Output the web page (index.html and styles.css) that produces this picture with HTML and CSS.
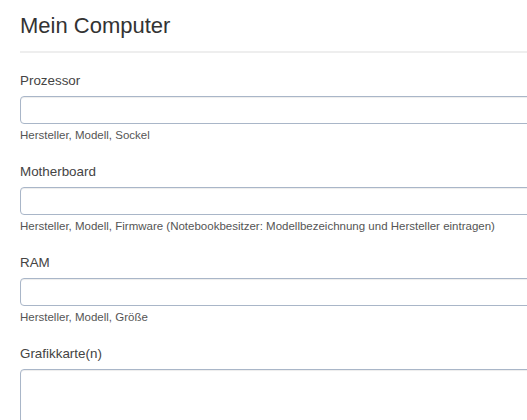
FILE: index.html
```html
<html>
<head>
<title>Mein Computer</title>
<link rel="stylesheet" href="styles.css">
</head>
<body>
<div class="page">
    <h1 class="title">Mein Computer</h1>
    <hr class="rule">
    <form class="sysform">
        <div class="group">
            <label class="lbl" for="cpu">Prozessor</label>
            <input class="field" id="cpu" type="text">
            <span class="help">Hersteller, Modell, Sockel</span>
        </div>
        <div class="group">
            <label class="lbl" for="board">Motherboard</label>
            <input class="field" id="board" type="text">
            <span class="help">Hersteller, Modell, Firmware (Notebookbesitzer: Modellbezeichnung und Hersteller eintragen)</span>
        </div>
        <div class="group">
            <label class="lbl" for="ram">RAM</label>
            <input class="field" id="ram" type="text">
            <span class="help">Hersteller, Modell, Größe</span>
        </div>
        <div class="group">
            <label class="lbl" for="gpu">Grafikkarte(n)</label>
            <textarea class="field area" id="gpu"></textarea>
        </div>
    </form>
</div>
</body>
</html>
```
FILE: styles.css
```css
html, body
{
    margin: 0;
    overflow: hidden;
    background-color: #fff;
}
.page
{
    width: 560px;
    padding: 13px 0 0 20px;
    font-family: "Liberation Sans", Arial, sans-serif;
}
.title
{
    margin: 0;
    font-size: 22px;
    line-height: 26px;
    font-weight: normal;
    color: #333;
}
.rule
{
    margin: 12px 0 18px 0;
    border: 0;
    border-top: 2px solid #eee;
}
.group
{
    display: flex;
    flex-direction: column;
    margin-bottom: 18px;
}
.lbl
{
    font-size: 13.4px;
    line-height: 20px;
    color: #444;
    margin-bottom: 5px;
}
.field
{
    box-sizing: border-box;
    width: 100%;
    height: 28px;
    margin: 0;
    border: 1px solid #a9b6c8;
    border-radius: 4px;
    box-shadow: inset 0 1px 1px rgba(0, 0, 0, .075);
    background: #fff;
}
.area
{
    height: 80px;
    resize: none;
}
.help
{
    margin-top: 3px;
    font-size: 11.5px;
    line-height: 17px;
    color: #555;
}
```
